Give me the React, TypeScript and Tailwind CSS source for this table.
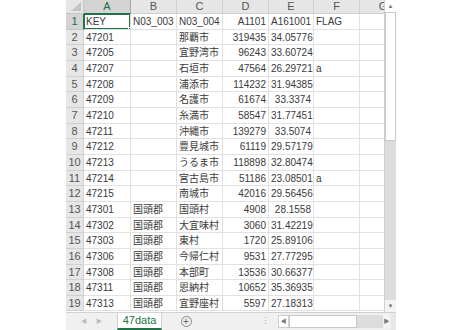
import React from 'react'

// sheet columns after the row header: A..F plus a partly visible G
const COL_W = ['w-[47px]', 'w-[46px]', 'w-[46px]', 'w-[46px]', 'w-[45px]', 'w-[46px]', 'w-[24px]']
const LETTERS = ['A', 'B', 'C', 'D', 'E', 'F', 'G']
// numeric columns are right aligned
const RIGHT = [false, false, false, true, true, false, false]

const ROWS: string[][] = [
  ['KEY', 'N03_003', 'N03_004', 'A1101', 'A161001', 'FLAG'],
  ['47201', '', '那覇市', '319435', '34.05776', ''],
  ['47205', '', '宜野湾市', '96243', '33.60724', ''],
  ['47207', '', '石垣市', '47564', '26.29721', 'a'],
  ['47208', '', '浦添市', '114232', '31.94385', ''],
  ['47209', '', '名護市', '61674', '33.3374', ''],
  ['47210', '', '糸満市', '58547', '31.77451', ''],
  ['47211', '', '沖縄市', '139279', '33.5074', ''],
  ['47212', '', '豊見城市', '61119', '29.57179', ''],
  ['47213', '', 'うるま市', '118898', '32.80474', ''],
  ['47214', '', '宮古島市', '51186', '23.08501', 'a'],
  ['47215', '', '南城市', '42016', '29.56456', ''],
  ['47301', '国頭郡', '国頭村', '4908', '28.1558', ''],
  ['47302', '国頭郡', '大宜味村', '3060', '31.42219', ''],
  ['47303', '国頭郡', '東村', '1720', '25.89106', ''],
  ['47306', '国頭郡', '今帰仁村', '9531', '27.77295', ''],
  ['47308', '国頭郡', '本部町', '13536', '30.66377', ''],
  ['47311', '国頭郡', '恩納村', '10652', '35.36935', ''],
  ['47313', '国頭郡', '宜野座村', '5597', '27.18313', ''],
]

const FONT = { fontFamily: '"Liberation Sans", "Noto Sans CJK JP", sans-serif' }

function HeaderRow() {
  return (
    <div className="flex h-[14px] shrink-0">
      <div className="relative w-[18px] shrink-0 border-r border-b border-[#c6c6c6] bg-[#e6e6e6]">
        <svg className="absolute right-[2px] bottom-[2px]" width="10" height="9" viewBox="0 0 10 9">
          <polygon points="10,0 10,9 0,9" fill="#c4c4c4" />
        </svg>
      </div>
      {LETTERS.map((l, i) => (
        <div
          key={l}
          className={`${COL_W[i]} shrink-0 overflow-hidden border-r border-b text-[11px] leading-[13px] ${
            i === 0 ? 'border-[#a8a8a8] bg-[#d4d4d4] text-[#1e6e42] border-b-[#217346]' : 'border-[#d0d0d0] bg-[#e6e6e6] text-[#555]'
          } ${i === 6 ? 'border-r-0' : 'text-center'}`}
        >
          {i === 6 ? <div className="w-[46px] text-center">{l}</div> : l}
        </div>
      ))}
    </div>
  )
}

function DataRow({ n, cells }: { n: number; cells: string[] }) {
  return (
    <div className="flex h-[15.67px] shrink-0">
      <div
        className={`w-[18px] shrink-0 border-r border-b text-center text-[11px] leading-[15px] ${
          n === 1 ? 'bg-[#d4d4d4] border-[#c6c6c6] border-r-[#217346] text-[#1e6e42]' : 'bg-[#e6e6e6] border-[#d0d0d0] text-[#555]'
        }`}
      >
        {n}
      </div>
      {COL_W.map((w, i) => (
        <div
          key={i}
          className={`relative ${w} shrink-0 overflow-hidden whitespace-nowrap border-r border-b border-[#e1e1e1] px-[2px] text-[10px] leading-[15px] text-[#3a3a3a] ${
            RIGHT[i] ? 'text-right' : 'text-left'
          } ${i === 6 ? 'border-r-0' : ''}`}
        >
          {cells[i] ?? ''}
          {n === 1 && i === 0 && (
            <>
              <span className="absolute -top-[1px] -left-[1px] right-[-1px] bottom-[-1px] border-2 border-[#217346]" />
              <span className="absolute right-[-3px] bottom-[-3px] h-[5px] w-[5px] border border-white bg-[#217346]" />
            </>
          )}
        </div>
      ))}
    </div>
  )
}

function VScroll() {
  return (
    <div className="flex w-[12px] shrink-0 flex-col border-l border-[#d0d0d0] bg-[#dcdcdc]">
      <div className="flex h-[12px] items-center justify-center bg-white text-[6px] text-[#777]">▲</div>
      <div className="h-[129px] border border-[#c8c8c8] bg-white" />
      <div className="flex-1" />
      <div className="flex h-[12px] items-center justify-center bg-[#f3f3f3] text-[6px] text-[#777]">▼</div>
    </div>
  )
}

function TabBar() {
  return (
    <div className="flex h-[18px] shrink-0 items-stretch border-t border-[#d0d0d0] bg-[#f0f0f0] text-[11px]">
      <div className="flex w-[51px] shrink-0 items-center justify-center gap-[9px] text-[6px] text-[#bbb]">
        <span>◀</span>
        <span>▶</span>
      </div>
      <div className="flex w-[45px] shrink-0 items-center justify-center border-x border-[#d0d0d0] border-b-2 border-b-[#217346] bg-white text-[#217346]">
        47data
      </div>
      <div className="flex w-[48px] shrink-0 items-center justify-center">
        <span className="flex h-[11px] w-[11px] items-center justify-center rounded-full border border-[#888] text-[10px] leading-none text-[#666]">
          +
        </span>
      </div>
      <div className="flex w-[62px] shrink-0 items-center justify-end pr-[2px] text-[9px] text-[#aaa]">⋮</div>
      <div className="ml-[6px] flex w-[112px] shrink-0 items-center py-[2px]">
        <div className="flex h-full w-[11px] items-center justify-center border border-[#d0d0d0] bg-white text-[6px] text-[#777]">◀</div>
        <div className="h-full w-[68px] border border-[#c8c8c8] bg-white" />
        <div className="h-full flex-1 bg-[#dcdcdc]" />
        <div className="flex h-full w-[7px] items-center justify-center bg-[#f3f3f3] text-[6px] text-[#777]">▶</div>
      </div>
      <div className="ml-[1px] w-[12px] shrink-0 bg-[#e6e6e6]" />
    </div>
  )
}

export default function App() {
  return (
    <div className="flex h-[330px] w-[462px] bg-white" style={FONT}>
      <div className="w-[66px] shrink-0" />
      <div className="flex w-[330px] shrink-0 flex-col overflow-hidden">
        <div className="flex h-[312px] shrink-0 overflow-hidden">
          <div className="flex w-[318px] shrink-0 flex-col overflow-hidden">
            <HeaderRow />
            {ROWS.map((r, i) => (
              <DataRow key={i} n={i + 1} cells={r} />
            ))}
          </div>
          <VScroll />
        </div>
        <TabBar />
      </div>
    </div>
  )
}
